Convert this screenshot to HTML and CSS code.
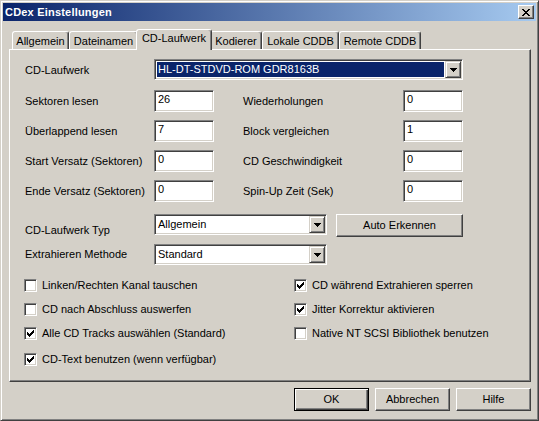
FILE: index.html
```html
<!DOCTYPE html>
<html lang="de">
<head>
<meta charset="utf-8">
<title>CDex Einstellungen</title>
<link rel="stylesheet" href="styles.css">
</head>
<body>
<div class="window">
  <div class="titlebar">
    <span class="title">CDex Einstellungen</span>
    <span class="close-btn">
      <svg width="8" height="7" viewBox="0 0 8 7" shape-rendering="crispEdges"><path fill="#000" d="M0 0h2v1h-2zM6 0h2v1h-2zM1 1h2v1h-2zM5 1h2v1h-2zM2 2h4v1h-4zM3 3h2v1h-2zM2 4h4v1h-4zM1 5h2v1h-2zM5 5h2v1h-2zM0 6h2v1h-2zM6 6h2v1h-2z"/></svg>
    </span>
  </div>
  <div class="client">
    <div class="tabs">
      <div class="tab t1">Allgemein</div>
      <div class="tab t2">Dateinamen</div>
      <div class="tab tab-active t3">CD-Laufwerk</div>
      <div class="tab t4">Kodierer</div>
      <div class="tab t5">Lokale CDDB</div>
      <div class="tab t6">Remote CDDB</div>
    </div>
    <div class="panel">
      <div class="form">
        <span class="lbl">CD-Laufwerk</span>
        <div class="combo combo-wide">
          <span class="combo-text selected">HL-DT-STDVD-ROM GDR8163B</span>
          <span class="drop"><svg width="7" height="4" viewBox="0 0 7 4" shape-rendering="crispEdges"><path fill="#000" d="M0 0h7v1h-1v1h-1v1h-1v1h-1v-1h-1v-1h-1v-1h-1z"/></svg></span>
        </div>

        <span class="lbl">Sektoren lesen</span>
        <span class="edit">26</span>
        <span class="lbl lbl-r">Wiederholungen</span>
        <span class="edit">0</span>

        <span class="lbl">Überlappend lesen</span>
        <span class="edit">7</span>
        <span class="lbl lbl-r">Block vergleichen</span>
        <span class="edit">1</span>

        <span class="lbl">Start Versatz (Sektoren)</span>
        <span class="edit">0</span>
        <span class="lbl lbl-r">CD Geschwindigkeit</span>
        <span class="edit">0</span>

        <span class="lbl">Ende Versatz (Sektoren)</span>
        <span class="edit">0</span>
        <span class="lbl lbl-r">Spin-Up Zeit (Sek)</span>
        <span class="edit">0</span>
      </div>

      <div class="row row-typ">
        <span class="lbl lbl-fixed lbl-low">CD-Laufwerk Typ</span>
        <div class="combo combo-mid">
          <span class="combo-text">Allgemein</span>
          <span class="drop"><svg width="7" height="4" viewBox="0 0 7 4" shape-rendering="crispEdges"><path fill="#000" d="M0 0h7v1h-1v1h-1v1h-1v1h-1v-1h-1v-1h-1v-1h-1z"/></svg></span>
        </div>
        <button class="btn btn-auto">Auto Erkennen</button>
      </div>

      <div class="row row-method">
        <span class="lbl lbl-fixed">Extrahieren Methode</span>
        <div class="combo combo-mid">
          <span class="combo-text">Standard</span>
          <span class="drop"><svg width="7" height="4" viewBox="0 0 7 4" shape-rendering="crispEdges"><path fill="#000" d="M0 0h7v1h-1v1h-1v1h-1v1h-1v-1h-1v-1h-1v-1h-1z"/></svg></span>
        </div>
      </div>

      <div class="checks">
        <div class="check-col col-left">
          <label class="check"><span class="box"></span><span>Linken/Rechten Kanal tauschen</span></label>
          <label class="check"><span class="box"></span><span>CD nach Abschluss auswerfen</span></label>
          <label class="check"><span class="box"><svg width="7" height="7" viewBox="0 0 7 7" shape-rendering="crispEdges"><path fill="#000" d="M6 0h1v1h-1zM5 1h2v1h-2zM0 2h1v1h-1zM4 2h3v1h-3zM0 3h2v1h-2zM3 3h3v1h-3zM0 4h5v1h-5zM1 5h3v1h-3zM2 6h1v1h-1z"/></svg></span><span>Alle CD Tracks auswählen (Standard)</span></label>
          <label class="check check-last"><span class="box"><svg width="7" height="7" viewBox="0 0 7 7" shape-rendering="crispEdges"><path fill="#000" d="M6 0h1v1h-1zM5 1h2v1h-2zM0 2h1v1h-1zM4 2h3v1h-3zM0 3h2v1h-2zM3 3h3v1h-3zM0 4h5v1h-5zM1 5h3v1h-3zM2 6h1v1h-1z"/></svg></span><span>CD-Text benutzen (wenn verfügbar)</span></label>
        </div>
        <div class="check-col">
          <label class="check"><span class="box"><svg width="7" height="7" viewBox="0 0 7 7" shape-rendering="crispEdges"><path fill="#000" d="M6 0h1v1h-1zM5 1h2v1h-2zM0 2h1v1h-1zM4 2h3v1h-3zM0 3h2v1h-2zM3 3h3v1h-3zM0 4h5v1h-5zM1 5h3v1h-3zM2 6h1v1h-1z"/></svg></span><span>CD während Extrahieren sperren</span></label>
          <label class="check"><span class="box"><svg width="7" height="7" viewBox="0 0 7 7" shape-rendering="crispEdges"><path fill="#000" d="M6 0h1v1h-1zM5 1h2v1h-2zM0 2h1v1h-1zM4 2h3v1h-3zM0 3h2v1h-2zM3 3h3v1h-3zM0 4h5v1h-5zM1 5h3v1h-3zM2 6h1v1h-1z"/></svg></span><span>Jitter Korrektur aktivieren</span></label>
          <label class="check"><span class="box"></span><span>Native NT SCSI Bibliothek benutzen</span></label>
        </div>
      </div>
    </div>
    <div class="footer">
      <button class="btn btn-default">OK</button>
      <button class="btn">Abbrechen</button>
      <button class="btn">Hilfe</button>
    </div>
  </div>
</div>
</body>
</html>
```

FILE: styles.css
```css
* { box-sizing: border-box; }
html, body { margin: 0; padding: 0; }
body {
  background: #D4D0C8;
  font-family: "Liberation Sans", Arial, sans-serif;
  font-size: 11px;
  color: #000;
}

.window {
  width: 539px;
  height: 421px;
  background: #D4D0C8;
  border: 1px solid;
  border-color: #D4D0C8 #404040 #404040 #D4D0C8;
  box-shadow: inset 1px 1px #fff, inset -1px -1px #808080;
  padding: 2px;
}

.titlebar {
  height: 18px;
  display: flex;
  align-items: center;
  padding: 0 2px;
  background: linear-gradient(to right, #0A246A, #A6CAF0);
}
.title {
  color: #fff;
  font-weight: bold;
  font-size: 11px;
  letter-spacing: 0.2px;
  line-height: 13px;
}
.close-btn {
  margin-left: auto;
  width: 16px;
  height: 14px;
  display: flex;
  align-items: center;
  justify-content: center;
  background: #D4D0C8;
  border: 1px solid;
  border-color: #fff #404040 #404040 #fff;
  box-shadow: inset -1px -1px #808080;
}
.close-btn svg { display: block; }

.client { padding: 8px 0 0 6px; }

.tabs {
  display: flex;
  align-items: flex-end;
  height: 20px;
  padding-left: 3px;
  position: relative;
  z-index: 1;
}
.tab {
  height: 18px;
  border: 1px solid;
  border-bottom: none;
  border-color: #fff #404040 transparent #fff;
  box-shadow: inset -1px 0 #808080;
  border-radius: 3px 3px 0 0;
  text-align: center;
  padding-top: 3px;
  line-height: 13px;
  background: #D4D0C8;
  white-space: nowrap;
}
.tab-active {
  height: 21px;
  margin: 0 -2px -1px;
  padding-top: 2px;
  position: relative;
  z-index: 2;
}
.t1 { width: 57px; }
.t2 { width: 69px; }
.t3 { width: 76px; }
.t4 { width: 52px; }
.t5 { width: 77px; }
.t6 { width: 82px; }

.panel {
  width: 522px;
  height: 333px;
  border: 1px solid;
  border-color: #fff #404040 #404040 #fff;
  box-shadow: inset -1px -1px #808080;
  padding: 9px 0 0 15px;
}

.lbl { line-height: 13px; white-space: nowrap; }

.form {
  display: grid;
  grid-template-columns: 129px 60px 29px 160px 60px;
  grid-template-rows: 23px repeat(4, 22px);
  row-gap: 8px;
  align-items: center;
}
.lbl-r { grid-column: 4; }
.combo-wide { grid-column: 2 / 6; align-self: start; }

.edit {
  height: 22px;
  background: #fff;
  border: 1px solid;
  border-color: #808080 #fff #fff #808080;
  box-shadow: inset 1px 1px #404040, inset -1px -1px #D4D0C8;
  padding: 2px 3px 0;
  line-height: 13px;
}

.combo {
  height: 21px;
  display: flex;
  background: #fff;
  border: 1px solid;
  border-color: #808080 #fff #fff #808080;
  box-shadow: inset 1px 1px #404040, inset -1px -1px #D4D0C8;
  padding: 1px;
}
.combo-mid { width: 173px; }
.combo-text {
  flex: 1;
  margin: 1px;
  padding-left: 1px;
  line-height: 15px;
  white-space: nowrap;
  overflow: hidden;
}
.combo-text.selected {
  background: #0A246A;
  color: #fff;
}
.drop {
  width: 16px;
  height: 17px;
  display: flex;
  align-items: center;
  justify-content: center;
  background: #D4D0C8;
  border: 1px solid;
  border-color: #D4D0C8 #404040 #404040 #D4D0C8;
  box-shadow: inset 1px 1px #fff, inset -1px -1px #808080;
}
.drop svg { display: block; }

.row { display: flex; }
.row-typ { margin-top: 12px; align-items: flex-start; }
.row-method { margin-top: 7px; align-items: center; }
.lbl-fixed { width: 129px; }
.lbl-low { padding-top: 10px; }

.btn {
  font: inherit;
  color: #000;
  width: 75px;
  height: 23px;
  padding: 0;
  background: #D4D0C8;
  border: 1px solid;
  border-color: #fff #404040 #404040 #fff;
  box-shadow: inset -1px -1px #808080;
  line-height: 13px;
  text-align: center;
}
.btn-auto { width: 127px; margin-left: 9px; }
.btn-default {
  border: 1px solid #000;
  box-shadow: inset 1px 1px #fff, inset -1px -1px #404040, inset -2px -2px #808080;
}

.checks {
  display: flex;
  margin: 14px 0 0 -1px;
}
.check-col {
  display: flex;
  flex-direction: column;
  gap: 11px;
}
.col-left { width: 270px; }
.check {
  display: flex;
  align-items: center;
  gap: 5px;
  height: 13px;
  line-height: 13px;
  white-space: nowrap;
}
.check-last { margin-top: 2px; }
.box {
  width: 13px;
  height: 13px;
  flex: none;
  background: #fff;
  border: 1px solid;
  border-color: #808080 #fff #fff #808080;
  box-shadow: inset 1px 1px #404040, inset -1px -1px #D4D0C8;
  padding: 2px;
}
.box svg { display: block; }

.footer {
  display: flex;
  justify-content: flex-end;
  gap: 6px;
  width: 522px;
  margin-top: 6px;
}
```
